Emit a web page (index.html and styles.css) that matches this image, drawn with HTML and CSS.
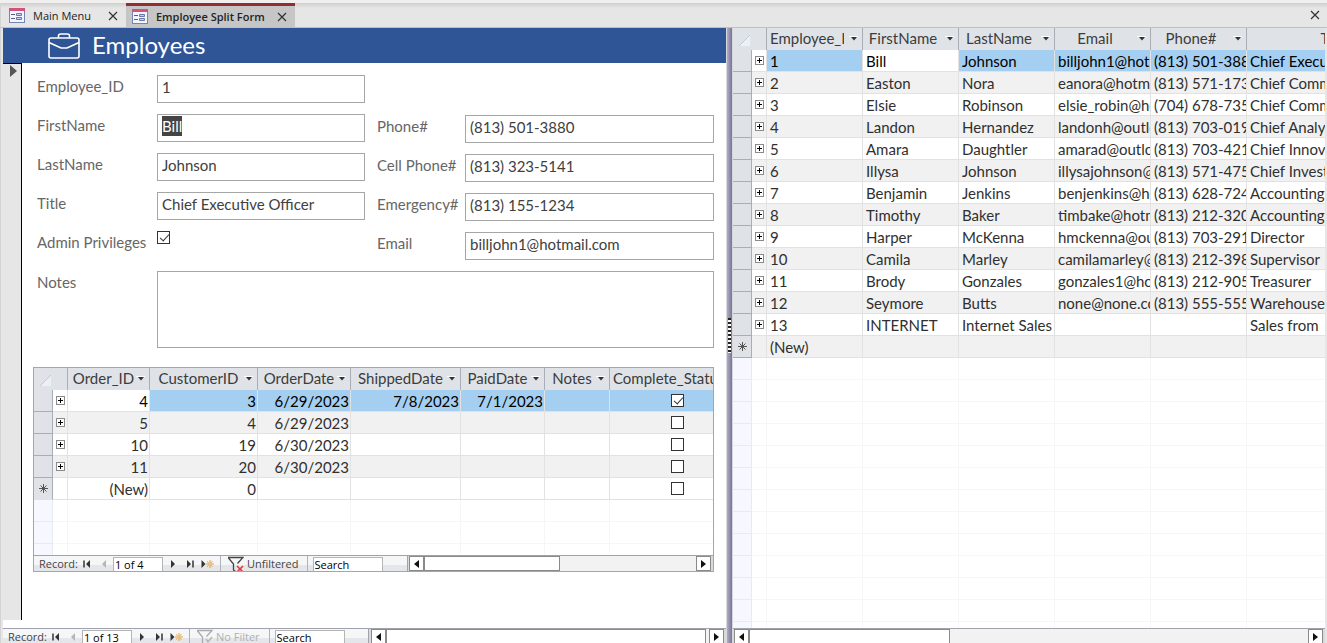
FILE: index.html
```html
<!DOCTYPE html>
<html lang="en">
<head>
<meta charset="utf-8">
<title>Employee Split Form</title>
<link rel="stylesheet" href="styles.css">
</head>
<body>
<svg class="defs" aria-hidden="true">
  <symbol id="form" viewBox="0 0 16 15"><rect x="0.5" y="0.5" width="15" height="14" fill="#f4f5fb" stroke="#7484b8"/><rect width="16" height="3" fill="#d1547c"/><path d="M2 6.5h4M2 10.5h4" stroke="#5a5f80"/><path d="M7.500 5.500h5v2h-5zM7.500 9.500h5v2h-5z" fill="#c5cdea" stroke="#6a78ad"/></symbol>
  <symbol id="close" viewBox="0 0 10 10"><path d="M1 1l8 8M9 1l-8 8" stroke="#333" stroke-width="1.200"/></symbol>
  <symbol id="plus" viewBox="0 0 9 9"><rect x="0.5" y="0.5" width="8" height="8" fill="#fff" stroke="#8a8a8a"/><path d="M2 4.500h5M4.500 2v5" stroke="#000"/></symbol>
  <symbol id="drop" viewBox="0 0 9 6"><path d="M0 0.500h9" stroke="#fff"/><path d="M2 1h6L5 4.500z" fill="#333"/></symbol>
  <symbol id="corner" viewBox="0 0 12 12"><path d="M12 0v11H1z" fill="#eceff3"/><path d="M12 0L1 11" stroke="#b9cbe0"/></symbol>
  <symbol id="star" viewBox="0 0 9 9"><path d="M4.500 0v9M0 4.500h9M1.500 1.500l6 6M7.500 1.500l-6 6" stroke="#555"/></symbol>
  <symbol id="first" viewBox="0 0 8 8"><path d="M1 0.500v7" stroke="#333" stroke-width="1.500"/><path d="M7 0v8L3 4z" fill="#333"/></symbol>
  <symbol id="prev" viewBox="0 0 8 8"><path d="M6 0v8L2 4z" fill="#b5b5b5"/></symbol>
  <symbol id="next" viewBox="0 0 8 8"><path d="M2 0v8l4-4z" fill="#333"/></symbol>
  <symbol id="last" viewBox="0 0 8 8"><path d="M7 0.500v7" stroke="#333" stroke-width="1.500"/><path d="M1 0v8l4-4z" fill="#333"/></symbol>
  <symbol id="new" viewBox="0 0 12 8"><path d="M0 0v8l4-4z" fill="#333"/><path d="M8.500 0v2M8.500 6v2M4.500 4h2M10.500 4h2M5.500 1.500l1.500 1M11 1.500l-1.500 1M5.500 6.500l1.500-1M11 6.500l-1.500-1" stroke="#e5a23c"/><circle cx="8.500" cy="4" r="1.300" fill="none" stroke="#e5a23c"/></symbol>
  <symbol id="unfiltered" viewBox="0 0 17 16"><path d="M1 1.500h15l-5.500 6M1.500 2l5 6v6l2 1.500" fill="none" stroke="#444" stroke-width="1.300"/><path d="M10 10l6 6M16 10l-6 6" stroke="#e0393e" stroke-width="1.600"/></symbol>
  <symbol id="nofilter" viewBox="0 0 17 16"><path d="M1 1.500h15l-5.500 6M1.500 2l5 6v6l2 1.500" fill="none" stroke="#aaa" stroke-width="1.300"/><path d="M10 10l2 3 4-5" fill="none" stroke="#b5b5b5" stroke-width="1.400"/></symbol>
  <symbol id="left" viewBox="0 0 5 8"><path d="M5 0v8L0 4z" fill="#111"/></symbol>
  <symbol id="right" viewBox="0 0 5 8"><path d="M0 0v8l5-4z" fill="#111"/></symbol>
</svg>

<div class="app">
  <nav class="tabs">
    <div class="tab"><button class="tab-name"><svg width="16" height="15"><use href="#form"/></svg>Main Menu</button><button class="x" aria-label="Close Main Menu"><svg width="10" height="10"><use href="#close"/></svg></button></div>
    <div class="tab active"><button class="tab-name"><svg width="16" height="15"><use href="#form"/></svg>Employee Split Form</button><button class="x" aria-label="Close Employee Split Form"><svg width="10" height="10"><use href="#close"/></svg></button></div>
    <button class="x close-all" aria-label="Close"><svg width="10" height="10"><use href="#close"/></svg></button>
  </nav>

  <div class="split">
    <main class="form-pane">
      <header class="title">
        <svg width="32" height="26" viewBox="0 0 32 26" fill="none" stroke="#fff" stroke-width="1.600"><rect x="1" y="5" width="30" height="20" rx="2"/><path d="M10.500 5V3q0-2 2-2h7q2 0 2 2v2M1 9.500l12 5.500h6l12-5.500"/></svg>
        <h1>Employees</h1>
      </header>
      <div class="body">
        <button class="selector" aria-label="Select record"><svg width="7" height="12" viewBox="0 0 7 12"><path d="M0 0v12l7-6z" fill="#555"/></svg></button>
        <div class="fields">
          <div class="columns">
            <div class="col">
              <label for="eid">Employee_ID</label><input class="box" id="eid" value="1">
              <label for="fn">FirstName</label><div class="box picked"><input id="fn" value="Bill"></div>
              <label for="ln">LastName</label><input class="box" id="ln" value="Johnson">
              <label for="ti">Title</label><input class="box" id="ti" value="Chief Executive Officer">
              <label for="ad">Admin Privileges</label><input type="checkbox" id="ad" checked>
            </div>
            <div class="col contact">
              <label for="ph">Phone#</label><input class="box" id="ph" value="(813) 501-3880">
              <label for="ce">Cell Phone#</label><input class="box" id="ce" value="(813) 323-5141">
              <label for="em">Emergency#</label><input class="box" id="em" value="(813) 155-1234">
              <label for="ma">Email</label><input class="box" id="ma" value="billjohn1@hotmail.com">
            </div>
          </div>
          <div class="notes"><label for="no">Notes</label><textarea class="box" id="no"></textarea></div>

          <section class="subform">
            <div class="sheet-wrap">
              <table class="sheet orders">
                <colgroup><col class="c-sel"><col class="c-plus"><col class="c82"><col class="c108"><col class="c93"><col class="c110"><col class="c84"><col class="c65"><col class="c136"></colgroup>
                <thead><tr><th colspan="2" class="corner"><svg width="12" height="12"><use href="#corner"/></svg></th>
                  <th><div><span>Order_ID</span><button aria-label="Order_ID menu"><svg width="9" height="6"><use href="#drop"/></svg></button></div></th>
                  <th><div><span>CustomerID</span><button aria-label="CustomerID menu"><svg width="9" height="6"><use href="#drop"/></svg></button></div></th>
                  <th><div><span>OrderDate</span><button aria-label="OrderDate menu"><svg width="9" height="6"><use href="#drop"/></svg></button></div></th>
                  <th><div><span>ShippedDate</span><button aria-label="ShippedDate menu"><svg width="9" height="6"><use href="#drop"/></svg></button></div></th>
                  <th><div><span>PaidDate</span><button aria-label="PaidDate menu"><svg width="9" height="6"><use href="#drop"/></svg></button></div></th>
                  <th><div><span>Notes</span><button aria-label="Notes menu"><svg width="9" height="6"><use href="#drop"/></svg></button></div></th>
                  <th><div><span>Complete_Status</span><button aria-label="Complete_Status menu"><svg width="9" height="6"><use href="#drop"/></svg></button></div></th></tr></thead>
                <tbody>
                  <tr class="current"><td></td><td><button aria-label="Expand"><svg width="9" height="9"><use href="#plus"/></svg></button></td><td class="cell">4</td><td>3</td><td>6/29/2023</td><td>7/8/2023</td><td>7/1/2023</td><td></td><td><input type="checkbox" aria-label="Complete" checked></td></tr>
                  <tr><td></td><td><button aria-label="Expand"><svg width="9" height="9"><use href="#plus"/></svg></button></td><td>5</td><td>4</td><td>6/29/2023</td><td></td><td></td><td></td><td><input type="checkbox" aria-label="Complete"></td></tr>
                  <tr><td></td><td><button aria-label="Expand"><svg width="9" height="9"><use href="#plus"/></svg></button></td><td>10</td><td>19</td><td>6/30/2023</td><td></td><td></td><td></td><td><input type="checkbox" aria-label="Complete"></td></tr>
                  <tr><td></td><td><button aria-label="Expand"><svg width="9" height="9"><use href="#plus"/></svg></button></td><td>11</td><td>20</td><td>6/30/2023</td><td></td><td></td><td></td><td><input type="checkbox" aria-label="Complete"></td></tr>
                  <tr class="new"><td><svg width="9" height="9"><use href="#star"/></svg></td><td></td><td>(New)</td><td>0</td><td></td><td></td><td></td><td></td><td><input type="checkbox" aria-label="Complete"></td></tr>
                  <tr class="empty"><td></td><td></td><td></td><td></td><td></td><td></td><td></td><td></td><td></td></tr>
                </tbody>
              </table>
            </div>
            <div class="foot">
              <div class="recnav">
                <label for="r1">Record:</label>
                <button aria-label="First record"><svg width="8" height="8"><use href="#first"/></svg></button><button aria-label="Previous record"><svg width="8" height="8"><use href="#prev"/></svg></button>
                <input id="r1" value="1 of 4">
                <button aria-label="Next record"><svg width="8" height="8"><use href="#next"/></svg></button><button aria-label="Last record"><svg width="8" height="8"><use href="#last"/></svg></button><button aria-label="New record"><svg width="13" height="8"><use href="#new"/></svg></button>
                <button class="filter"><svg width="17" height="16"><use href="#unfiltered"/></svg>Unfiltered</button>
                <input class="search" aria-label="Search" value="Search">
              </div>
              <div class="scroll">
                <button aria-label="Scroll left"><svg width="5" height="8"><use href="#left"/></svg></button>
                <div class="track"><div class="thumb half"></div></div>
                <button aria-label="Scroll right"><svg width="5" height="8"><use href="#right"/></svg></button>
              </div>
            </div>
          </section>
        </div>
      </div>
      <div class="foot bottom">
        <div class="recnav">
          <label for="r2">Record:</label>
          <button aria-label="First record"><svg width="8" height="8"><use href="#first"/></svg></button><button aria-label="Previous record"><svg width="8" height="8"><use href="#prev"/></svg></button>
          <input id="r2" value="1 of 13">
          <button aria-label="Next record"><svg width="8" height="8"><use href="#next"/></svg></button><button aria-label="Last record"><svg width="8" height="8"><use href="#last"/></svg></button><button aria-label="New record"><svg width="13" height="8"><use href="#new"/></svg></button>
          <button class="filter off"><svg width="17" height="16"><use href="#nofilter"/></svg>No Filter</button>
          <input class="search" aria-label="Search" value="Search">
        </div>
        <div class="scroll">
          <button aria-label="Scroll left"><svg width="5" height="8"><use href="#left"/></svg></button>
          <div class="track"><div class="thumb full"></div></div>
          <button aria-label="Scroll right"><svg width="5" height="8"><use href="#right"/></svg></button>
        </div>
      </div>
    </main>

    <div class="splitter"><div class="grip"></div></div>

    <section class="data-pane">
      <div class="sheet-wrap">
        <table class="sheet people">
          <colgroup><col class="c-sel"><col class="c-plus"><col class="c96"><col class="c96"><col class="c96"><col class="c96"><col class="c96"><col class="c192"><col></colgroup>
          <thead><tr><th colspan="2" class="corner"><svg width="12" height="12"><use href="#corner"/></svg></th>
            <th><div><span>Employee_ID</span><button aria-label="Employee_ID menu"><svg width="9" height="6"><use href="#drop"/></svg></button></div></th>
            <th><div><span>FirstName</span><button aria-label="FirstName menu"><svg width="9" height="6"><use href="#drop"/></svg></button></div></th>
            <th><div><span>LastName</span><button aria-label="LastName menu"><svg width="9" height="6"><use href="#drop"/></svg></button></div></th>
            <th><div><span>Email</span><button aria-label="Email menu"><svg width="9" height="6"><use href="#drop"/></svg></button></div></th>
            <th><div><span>Phone#</span><button aria-label="Phone# menu"><svg width="9" height="6"><use href="#drop"/></svg></button></div></th>
            <th><div><span>Title</span><button aria-label="Title menu"><svg width="9" height="6"><use href="#drop"/></svg></button></div></th><th></th></tr></thead>
          <tbody>
            <tr class="current"><td></td><td><button aria-label="Expand"><svg width="9" height="9"><use href="#plus"/></svg></button></td><td>1</td><td class="cell">Bill</td><td>Johnson</td><td>billjohn1@hotmail.com</td><td>(813) 501-3880</td><td>Chief Executive Officer</td><td></td></tr>
            <tr><td></td><td><button aria-label="Expand"><svg width="9" height="9"><use href="#plus"/></svg></button></td><td>2</td><td>Easton</td><td>Nora</td><td>eanora@hotmail.com</td><td>(813) 571-173</td><td>Chief Communications</td><td></td></tr>
            <tr><td></td><td><button aria-label="Expand"><svg width="9" height="9"><use href="#plus"/></svg></button></td><td>3</td><td>Elsie</td><td>Robinson</td><td>elsie_robin@hotmail.com</td><td>(704) 678-735</td><td>Chief Communications</td><td></td></tr>
            <tr><td></td><td><button aria-label="Expand"><svg width="9" height="9"><use href="#plus"/></svg></button></td><td>4</td><td>Landon</td><td>Hernandez</td><td>landonh@outlook.com</td><td>(813) 703-019</td><td>Chief Analyst</td><td></td></tr>
            <tr><td></td><td><button aria-label="Expand"><svg width="9" height="9"><use href="#plus"/></svg></button></td><td>5</td><td>Amara</td><td>Daughtler</td><td>amarad@outlook.com</td><td>(813) 703-421</td><td>Chief Innovation</td><td></td></tr>
            <tr><td></td><td><button aria-label="Expand"><svg width="9" height="9"><use href="#plus"/></svg></button></td><td>6</td><td>Illysa</td><td>Johnson</td><td>illysajohnson@hotmail.com</td><td>(813) 571-475</td><td>Chief Investment</td><td></td></tr>
            <tr><td></td><td><button aria-label="Expand"><svg width="9" height="9"><use href="#plus"/></svg></button></td><td>7</td><td>Benjamin</td><td>Jenkins</td><td>benjenkins@hotmail.com</td><td>(813) 628-724</td><td>Accounting</td><td></td></tr>
            <tr><td></td><td><button aria-label="Expand"><svg width="9" height="9"><use href="#plus"/></svg></button></td><td>8</td><td>Timothy</td><td>Baker</td><td>timbake@hotmail.com</td><td>(813) 212-320</td><td>Accounting</td><td></td></tr>
            <tr><td></td><td><button aria-label="Expand"><svg width="9" height="9"><use href="#plus"/></svg></button></td><td>9</td><td>Harper</td><td>McKenna</td><td>hmckenna@outlook.com</td><td>(813) 703-291</td><td>Director</td><td></td></tr>
            <tr><td></td><td><button aria-label="Expand"><svg width="9" height="9"><use href="#plus"/></svg></button></td><td>10</td><td>Camila</td><td>Marley</td><td>camilamarley@hotmail.com</td><td>(813) 212-398</td><td>Supervisor</td><td></td></tr>
            <tr><td></td><td><button aria-label="Expand"><svg width="9" height="9"><use href="#plus"/></svg></button></td><td>11</td><td>Brody</td><td>Gonzales</td><td>gonzales1@hotmail.com</td><td>(813) 212-905</td><td>Treasurer</td><td></td></tr>
            <tr><td></td><td><button aria-label="Expand"><svg width="9" height="9"><use href="#plus"/></svg></button></td><td>12</td><td>Seymore</td><td>Butts</td><td>none@none.com</td><td>(813) 555-555</td><td>Warehouse</td><td></td></tr>
            <tr><td></td><td><button aria-label="Expand"><svg width="9" height="9"><use href="#plus"/></svg></button></td><td>13</td><td>INTERNET</td><td>Internet Sales</td><td></td><td></td><td>Sales from</td><td></td></tr>
            <tr class="new"><td><svg width="9" height="9"><use href="#star"/></svg></td><td></td><td>(New)</td><td></td><td></td><td></td><td></td><td></td><td></td></tr>
            <tr class="empty"><td></td><td></td><td></td><td></td><td></td><td></td><td></td><td></td><td></td></tr>
          </tbody>
        </table>
      </div>
      <div class="foot bottom">
        <div class="scroll">
          <button aria-label="Scroll left"><svg width="5" height="8"><use href="#left"/></svg></button>
          <div class="track"><div class="thumb third"></div></div>
          <button aria-label="Scroll right"><svg width="5" height="8"><use href="#right"/></svg></button>
        </div>
      </div>
    </section>
  </div>
</div>
</body>
</html>
```
FILE: styles.css
```css
* { box-sizing: border-box; }
body { margin: 0; font: 15px/22px Lato, "Open Sans", sans-serif; color: #2f2f2f; overflow: hidden; }
.defs { position: absolute; width: 0; height: 0; }
svg { display: block; flex: none; }
button { margin: 0; padding: 0; border: 0; background: none; font: inherit; color: inherit; }
input, textarea { margin: 0; font: inherit; color: inherit; outline: none; border-radius: 0; }

.app { display: flex; flex-direction: column; height: 100vh; border-top: 3px solid #f2f0ee; background: #e6e6e6; }

.tabs { display: flex; flex: none; height: 25px; padding: 0 7px 0 2px; border-bottom: 1px solid #c0c0c0; border-left: 1px solid #d4d4d4; background: linear-gradient(#cfcfcf, #e6e6e6 5px); font: 11px/16px "Open Sans", sans-serif; color: #222; }
.tab { display: flex; align-items: center; gap: 17px; padding: 1px 8px 0 6px; }
.tab.active { padding-top: 0; border-top: 3px solid #942c30; background: #c6c6c6; font-weight: 600; gap: 12px; }
.tab-name { display: flex; align-items: center; gap: 8px; white-space: nowrap; }
.close-all { margin-left: auto; }

.split { display: grid; grid-template-columns: minmax(0, 723fr) 7px minmax(0, 592fr); flex: 1; min-height: 0; padding: 0 2px; border-left: 1px solid #d4d4d4; }
.form-pane, .data-pane { display: flex; flex-direction: column; min-height: 0; min-width: 0; overflow: hidden; background: #fff; }

.title { display: flex; align-items: center; gap: 12px; flex: none; height: 35px; padding-left: 45px; background: #2f5597; color: #fff; }
.title h1 { margin: 0; padding-bottom: 2px; font-size: 24px; font-weight: 400; line-height: 33px; }

.body { display: flex; flex: 1; min-height: 0; padding-bottom: 8px; }
.selector { display: flex; flex: none; justify-content: flex-end; align-items: flex-start; width: 19px; padding: 1px 4px 0 0; border-top: 1px solid #000; border-right: 1px solid #000; background: #e6e6e6; }
.fields { display: flex; flex-direction: column; flex: 1; min-width: 0; padding: 12px 12px 48px 11px; }

.columns { display: flex; gap: 12px; padding-left: 4px; }
.col { display: grid; grid-template-columns: 120px minmax(0, 1fr); grid-auto-rows: 28px; row-gap: 11px; flex: 328 1 0; }
.col.contact { grid-template-columns: 88px minmax(0, 1fr); flex: 337 1 0; padding-top: 40px; margin-bottom: -1px; }
label { color: #666; line-height: 23px; white-space: nowrap; }
.box { width: 100%; height: 28px; padding: 0 4px 4px; border: 1px solid #a6a6a6; background: #fff; color: #404040; }
.picked { display: flex; align-items: center; }
.picked input { field-sizing: content; height: 20px; padding: 0; border: 0; background: #444; color: #fff; }
.notes { display: grid; grid-template-columns: 120px minmax(0, 1fr); padding: 12px 0 0 4px; }
textarea.box { height: 77px; resize: none; }

input[type="checkbox"] { appearance: none; display: block; width: 13px; height: 13px; border: 1px solid #333; background: #fff; }
input[type="checkbox"]:checked::after { content: ""; display: block; width: 8px; height: 4px; margin: 2px 0 0 2px; border: solid #333; border-width: 0 0 1px 1px; transform: rotate(-48deg); }

.subform { display: flex; flex-direction: column; flex: 1; min-height: 0; margin-top: 19px; border: 1px solid #a6a6a6; }
.sheet-wrap { flex: 1; min-height: 0; overflow: hidden; }

.sheet { width: 100%; height: 100%; table-layout: fixed; border-collapse: separate; border-spacing: 0; }
.orders { min-width: 712px; }
.people { min-width: 706px; }
.c-sel { width: 19px; }
.c-plus { width: 15px; }
.c65 { width: 65px; }
.c82 { width: 82px; }
.c84 { width: 84px; }
.c93 { width: 93px; }
.c96 { width: 96px; }
.c108 { width: 108px; }
.c110 { width: 110px; }
.c136 { width: 136px; }
.c192 { width: 192px; }
th { height: 22px; padding: 0; border-right: 1px solid #a9aeb6; background: #dfe3e8; font-weight: 400; color: #3c3c3c; }
th div { display: flex; align-items: center; padding: 0 4px 0 3px; }
th span { flex: 1; min-width: 0; padding-bottom: 2px; line-height: 20px; overflow: hidden; white-space: nowrap; text-align: center; }
.people th div { gap: 5px; }
th.corner svg { margin: 4px 0 0 5px; }
.orders th:last-child span { flex: none; }
td { height: 22px; padding: 2px 2px 0 3px; border-right: 1px solid #e2e2e2; border-bottom: 1px solid #e2e2e2; background: #fff; line-height: 19px; white-space: nowrap; overflow: hidden; }
tr:nth-child(even) td { background: #f1f1f1; }
tr.current td { background: #a5cff0; color: #000; }
tr.current td:nth-child(2), tr.current td.cell { background: #fff; }
tr td:first-child, tr:nth-child(even) td:first-child, tr.current td:first-child { padding: 0 0 0 5px; border-color: #a9aeb6; background: #dfe3e8; }
td:nth-child(2), .orders td:nth-child(2) { padding: 0; }
td:nth-child(2) button { display: block; margin: -1px auto 0; }
.orders td { text-align: right; padding: 2px 1px 0; }
.orders td input { margin: -2px auto 0; }
.orders tr.new td:first-child { border-color: #e2e2e2 #a9aeb6 #e2e2e2 #dfe3e8; }
tr.empty td, tr.empty:nth-child(even) td { height: auto; border-color: #f6f6f6; border-bottom: 0; background: repeating-linear-gradient(transparent 0 21px, #f6f6f6 21px 22px); }
tr.empty td:first-child, tr.empty:nth-child(even) td:first-child { border-color: #e9e9f0; background: repeating-linear-gradient(#f7f7ff 0 21px, #e9e9f0 21px 22px); }

.foot { display: flex; flex: none; height: 16px; overflow: hidden; border-top: 1px solid #a0a3ad; font: 11px/16px "Open Sans", sans-serif; }
.foot.bottom { height: 15px; align-items: flex-start; }
.recnav { display: flex; align-items: flex-start; flex: none; width: 374px; height: 18px; padding-left: 5px; border-right: 1px solid #a0a3ad; background: linear-gradient(#f5f6f8 0 9px, #e4e6ea 9px); }
.bottom .recnav { width: 366px; }
.recnav label { margin-right: 1px; line-height: 16px; color: #444; }
.recnav button { display: flex; flex: none; align-items: center; justify-content: center; width: 17px; height: 16px; }
.recnav input { width: 50px; height: 16px; margin: 1px 2px 0 0; padding: 0 1px 2px; border: 1px solid #b5b5b5; border-bottom: 0; background: #fff; color: #000; line-height: 13px; }
.recnav input.search { width: 70px; margin-left: 5px; }
.recnav .filter { width: auto; gap: 3px; margin-left: 4px; padding: 0 8px 0 6px; border: solid #b0b3bb; border-width: 0 1px; color: #444; }
.recnav .filter.off { color: #b0b0b0; padding-right: 9px; }

.scroll { display: flex; flex: 1; min-width: 0; height: 16px; padding: 0 2px 0 1px; background: #dadada; }
.form-pane > .bottom .scroll { padding-left: 2px; }
.scroll button { display: flex; flex: none; align-items: center; justify-content: center; width: 15px; height: 15px; border: 1px solid #8a8a8a; background: #fff; }
.track { flex: 1; background: #f2f2f2; }
.thumb { height: 15px; border: 1px solid #8a8a8a; background: #fff; }
.half { width: 50%; }
.full { width: 99%; }
.third { width: 36%; }

.splitter { display: flex; align-items: center; justify-content: center; border: solid #d8d8dc; border-width: 0 1px; background: linear-gradient(90deg, #b0aec4, #77749a); }
.grip { width: 3px; height: 35px; background: repeating-linear-gradient(#222 0 2px, #fff 2px 4px); }
```
